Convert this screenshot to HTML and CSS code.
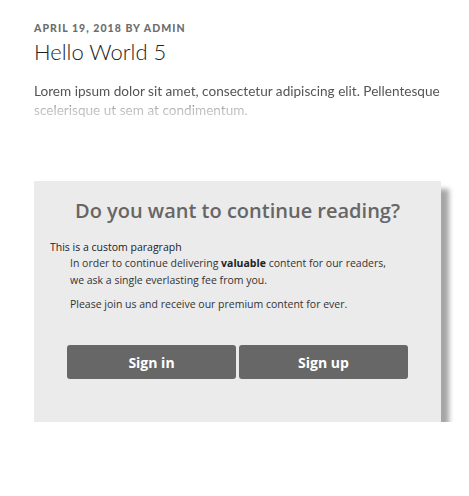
FILE: index.html
```html
<!DOCTYPE html>
<html>
<head>
<meta charset="utf-8">
<link rel="stylesheet" href="styles.css">
</head>
<body>
<article class="post">
  <div class="meta">April 19, 2018 by admin</div>
  <h1 class="title">Hello World 5</h1>
  <p class="excerpt">Lorem ipsum dolor sit amet, consectetur adipiscing elit. Pellentesque scelerisque ut sem at condimentum.</p>
  <div class="paywall">
    <h2 class="pw-title">Do you want to continue reading?</h2>
    <p class="pw-custom">This is a custom paragraph</p>
    <div class="pw-body">
      <p>In order to continue delivering <b>valuable</b> content for our readers, we ask a single everlasting fee from you.</p>
      <p>Please join us and receive our premium content for ever.</p>
    </div>
    <div class="pw-actions">
      <a class="btn">Sign in</a>
      <a class="btn">Sign up</a>
    </div>
  </div>
</article>
</body>
</html>
```
FILE: styles.css
```css
html, body { margin: 0; padding: 0; background: #fff; }
.post {
  padding: 21px 10px 0 34px;
  font-family: Lato, "Liberation Sans", sans-serif;
}
.meta {
  font-size: 10.5px;
  font-weight: 900;
  text-transform: uppercase;
  letter-spacing: 0.1em;
  color: #6d6d6d;
  line-height: 14px;
}
.title {
  margin: 2px 0 0;
  font-size: 22px;
  font-weight: 300;
  color: #222;
  line-height: 30px;
}
.excerpt {
  margin: 15px 0 0;
  font-size: 13.6px;
  line-height: 19px;
  color: #555;
  -webkit-mask-image: linear-gradient(to bottom, #000 45%, rgba(0,0,0,0.35) 75%);
  mask-image: linear-gradient(to bottom, #000 45%, rgba(0,0,0,0.35) 75%);
}
.paywall {
  margin: 61px 0 0;
  width: 407px;
  height: 241px;
  box-sizing: border-box;
  background: #ebebeb;
  box-shadow: 8px 8px 5px #a6a6a6;
  padding: 16px 16px 0 16px;
  font-family: "Open Sans", "Noto Sans", sans-serif;
}
.pw-title {
  margin: 0;
  text-align: center;
  font-size: 20px;
  font-weight: 600;
  color: #666;
  line-height: 28px;
}
.pw-custom {
  margin: 15px 0 0;
  font-size: 10.5px;
  color: #222;
  line-height: 15px;
}
.pw-body {
  padding: 0 26px 0 20px;
  font-size: 10.5px;
  color: #333;
  font-weight: 500;
  line-height: 17px;
}
.pw-body p { margin: 0 0 7px; }
.pw-body b { font-weight: 700; color: #222; }
.pw-actions {
  display: flex;
  justify-content: center;
  gap: 3px;
  margin-top: 32px;
}
.btn {
  width: 169px;
  height: 34px;
  display: flex;
  align-items: center;
  justify-content: center;
  background: #676767;
  border-radius: 3px;
  color: #fff;
  font-size: 14px;
  font-weight: 700;
}
```
